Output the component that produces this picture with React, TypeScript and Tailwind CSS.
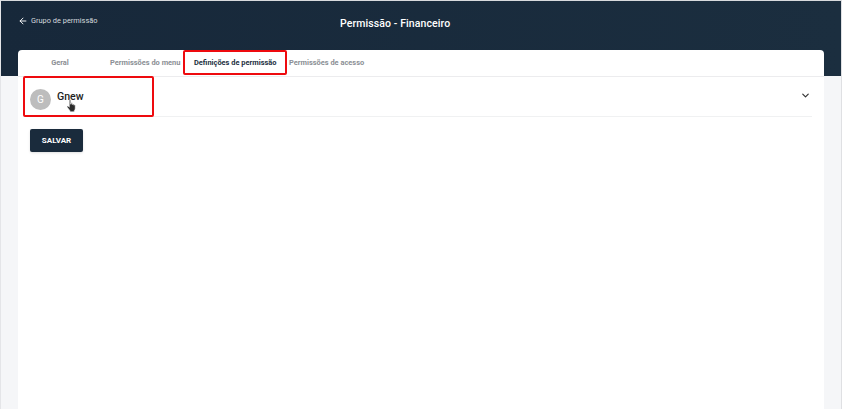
import React from "react";
import { ArrowLeft, ChevronDown } from "lucide-react";

export default function App() {
  return (
    <div className="relative h-[415px] w-[847px] overflow-hidden bg-white font-['Roboto',sans-serif]">
      <div className="flex h-[409px] w-[842px] flex-col border-l border-r border-t border-l-[#e4e5e8] border-r-[#dfe0e3] border-t-[#d8dadd] bg-[#f5f6f8]">
        <header className="flex h-[75px] shrink-0 items-start bg-gradient-to-r from-[#17283a] to-[#1b2e3f] text-white">
          <div className="flex w-[339px] items-center gap-[3px] pl-[17px] pt-[14px] text-[7.4px] leading-[12px] text-[#d5d9de]">
            <ArrowLeft size={10} strokeWidth={2.2} className="text-white" />
            <span>Grupo de permissão</span>
          </div>
          <h1 className="pt-[15px] text-[10.5px] font-medium leading-[16px] tracking-[0.1px]">Permissão - Financeiro</h1>
        </header>
        <main className="relative mx-[17px] -mt-[26px] flex-1 rounded-t-[4px] bg-white">
          <nav className="flex h-[27px] items-center border-b border-[#ececee] text-[7.45px] font-bold leading-none">
            <span className="w-[84px] text-center text-[#8b8f95]">Geral</span>
            <span className="ml-[8px] w-[84px] whitespace-nowrap text-[#8b8f95]">Permissões do menu</span>
            <span className="w-[95px] whitespace-nowrap text-[#1c2f41]">Definições de permissão</span>
            <span className="whitespace-nowrap text-[#8b8f95]">Permissões de acesso</span>
          </nav>
          <div className="px-[12px]">
            <div className="flex h-[40px] items-center border-b-[1.5px] border-[#f0f1f2] pr-[1px]">
              <div className="mt-[5px] flex h-[21px] w-[21px] items-center justify-center rounded-full bg-[#bdbdbd] text-[10px] text-white">G</div>
              <span className="ml-[6px] mt-[2px] text-[10.6px] font-medium leading-none text-[#222]">Gnew</span>
              <ChevronDown size={11} strokeWidth={2.6} className="-mt-[2px] ml-auto text-[#333]" />
            </div>
            <button className="mt-[12px] flex h-[23px] w-[53px] items-center justify-center rounded-[2px] bg-[#1a2b3c] text-[8px] font-bold text-white shadow-sm">
              SALVAR
            </button>
          </div>
          <div className="absolute left-[165px] top-0 h-[25px] w-[104px] rounded-[2px] border-[2.5px] border-[#ee0a0e]" />
          <div className="absolute left-[5px] top-[26px] h-[41px] w-[131px] rounded-[2px] border-[2.5px] border-[#ee0a0e]" />
          <svg className="absolute left-[48px] top-[49px]" width="12" height="14" viewBox="0 0 11 13">
            <path
              d="M3 1.2c0-.7 1.3-.7 1.3 0v3.6l.4 0V4c0-.6 1.1-.6 1.1 0v1l.4 0c0-.6 1-.6 1 0v.7l.3 0c.1-.5 1-.4 1 .2v2.6c0 1-.5 1.7-.9 2.4v1H3.600v-1C2.800 9.900 1.900 8.800 1.100 7.600.6 6.900 1.500 6.200 2.100 6.800L3 7.700z"
              fill="#2b2b2b"
              stroke="#fff"
              strokeWidth="0.5"
            />
          </svg>
        </main>
      </div>
    </div>
  );
}
